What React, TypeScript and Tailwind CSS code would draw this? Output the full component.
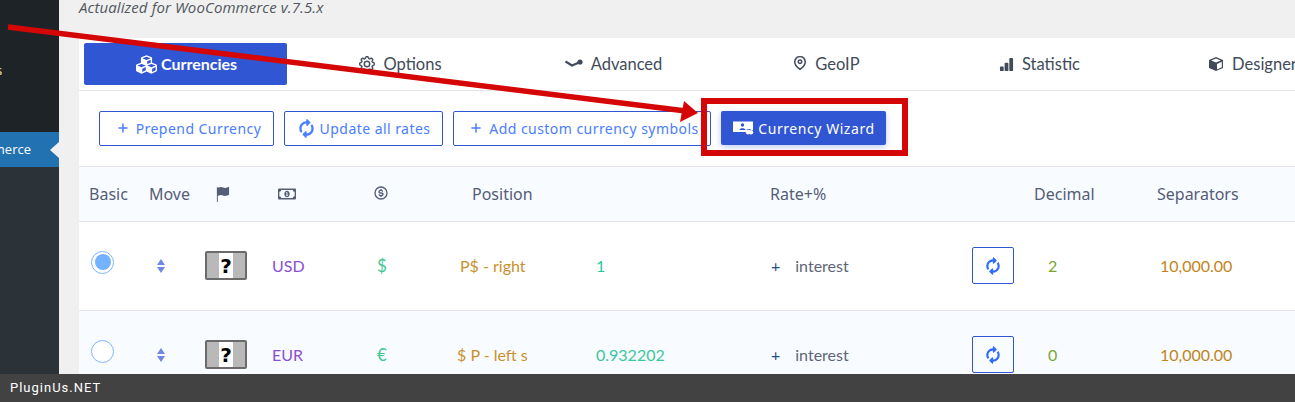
import { FaCubes, FaSyncAlt, FaRegMoneyBillAlt } from 'react-icons/fa'
import { BsGear, BsBarChartFill, BsFlagFill } from 'react-icons/bs'
import { BiDollarCircle } from 'react-icons/bi'
import { FiPlus, FiMapPin } from 'react-icons/fi'

const tabs = [
  { label: 'Options', icon: <BsGear size={16} strokeWidth={0.5} /> },
  { label: 'Advanced', icon: <AdvancedIcon /> },
  { label: 'GeoIP', icon: <FiMapPin size={14} strokeWidth={2.6} className="mb-[3px]" /> },
  { label: 'Statistic', icon: <BsBarChartFill size={15} /> },
  { label: 'Designer', icon: <DesignerIcon /> },
]

const rows = [
  { code: 'USD', symbol: '$', position: 'P$ - right', positionPad: 'pl-[30px]', rate: '1', decimal: '2', checked: true, bg: 'bg-white', rateColor: 'text-[#1fc99b]' },
  { code: 'EUR', symbol: '€', position: '$ P - left s', positionPad: 'pl-[27px]', rate: '0.932202', decimal: '0', checked: false, bg: 'bg-[#f8fbff]', rateColor: 'text-[#3cc79a]' },
]

function AdvancedIcon() {
  return (
    <svg width="18" height="10" viewBox="0 0 18 10" fill="none">
      <path d="M0.5 2.5 L7 6.5 L14 3.5" stroke="#414b5a" strokeWidth="2.2" />
      <circle cx="15" cy="3" r="2.6" fill="#414b5a" />
    </svg>
  )
}

function DesignerIcon() {
  return (
    <svg width="16" height="16" viewBox="0 0 16 16">
      <path d="M8 1 L15 4 V12 L8 15 L1 12 V4 Z" fill="#414b5a" />
      <path d="M8 2.6 L12.8 4.5 L8 6.5 L3.2 4.5 Z M9 8 L13.8 5.8 V11.3 L9 13.4 Z" fill="#fff" />
    </svg>
  )
}

function WizardIcon() {
  return (
    <svg width="21" height="14" viewBox="0 0 21 14">
      <path d="M0 0.5 H20 V9 H18 L17 8 H14 L12.5 11 H0 Z" fill="#fff" />
      <circle cx="9.5" cy="4" r="1.7" fill="#3056d3" />
      <path d="M6.5 9 C6.5 6.5 12.5 6.5 12.5 9 Z" fill="#3056d3" />
      <circle cx="15" cy="11" r="2.4" fill="#fff" />
      <circle cx="18" cy="11.2" r="2.2" fill="#fff" />
    </svg>
  )
}

function UnknownFlag() {
  return (
    <div className="flex h-[29px] w-[42px] justify-center rounded-[2px] border-2 border-[#6b6b6b] bg-[#b9b9b9]">
      <div className="flex w-[14px] items-center justify-center bg-white font-['DejaVu_Sans',sans-serif] text-[20px] leading-none font-bold text-black">
        ?
      </div>
    </div>
  )
}

function RefreshButton() {
  return (
    <div className="flex h-[37px] w-[42px] items-center justify-center rounded-[2px] border border-[#3056d3] text-[#2f6bff]">
      <FaSyncAlt size={14} className="-rotate-45" />
    </div>
  )
}

function OutlineButton({ icon, label, className }: { icon: React.ReactNode; label: string; className: string }) {
  return (
    <div className={`flex h-[35px] items-center justify-center gap-[6px] rounded-[2px] border border-[#3056d3] text-[14px] tracking-[0.45px] text-[#4a7dff] ${className}`}>
      {icon}
      <span>{label}</span>
    </div>
  )
}

export default function App() {
  return (
    <div className="relative flex h-[402px] w-[1295px] flex-col overflow-hidden bg-[#f0f0f1] font-['Noto_Sans',sans-serif]">
      <div className="flex min-h-0 flex-1">
        <aside className="flex w-[59px] shrink-0 flex-col">
          <div className="h-[132px] bg-[#1d2327] pt-[61px] text-[13px] text-[#e8e0b0]">
            <div className="-ml-[4px] leading-[18px]">s</div>
          </div>
          <div className="flex h-[35px] items-center justify-end overflow-hidden bg-[#2271b1] whitespace-nowrap text-white">
            <span className="font-['Open_Sans',sans-serif] text-[13px]">WooCommerce</span>
            <span className="ml-[19px] h-0 w-0 shrink-0 border-y-[8px] border-r-[9px] border-y-transparent border-r-[#f0f0f1]" />
          </div>
          <div className="flex-1 bg-[#2c3338]" />
        </aside>

        <main className="min-w-0 flex-1 overflow-hidden pl-[20px]">
          <div className="flow-root h-[38px]">
            <p className="-mt-[3px] font-['Open_Sans',sans-serif] text-[15px] leading-[20px] tracking-[0.1px] italic text-[#50575e]">
              Actualized for WooCommerce v.7.5.x
            </p>
          </div>

          <section className="w-[1300px] bg-white">
            <div className="flex h-[53px] gap-[10px] overflow-hidden border-b border-[#e3e5e9] pt-[5px] pl-[5px] font-['Lato',sans-serif]">
              <div className="flex h-[42px] w-[203px] shrink-0 items-center justify-center gap-[4px] rounded-[2px] bg-[#3056d3] pl-[2px] text-[16px] font-bold text-white">
                <FaCubes size={21} />
                <span>Currencies</span>
              </div>
              {tabs.map((tab) => (
                <div key={tab.label} className="flex h-[42px] w-[203px] shrink-0 items-center justify-center gap-[8px] pl-[4px] text-[16.5px] whitespace-nowrap text-[#414b5a]">
                  {tab.icon}
                  <span>{tab.label}</span>
                </div>
              ))}
            </div>

            <div className="flex h-[76px] items-center gap-[10px] border-b border-[#e3e5e9] pb-[1px] pl-[20px]">
              <OutlineButton className="w-[175px] pl-[4px]" icon={<FiPlus size={14} strokeWidth={2.6} />} label="Prepend Currency" />
              <OutlineButton className="w-[159px] pl-[2px]" icon={<FaSyncAlt size={15} className="-rotate-45" />} label="Update all rates" />
              <OutlineButton className="w-[258px] pl-[4px]" icon={<FiPlus size={14} strokeWidth={2.6} />} label="Add custom currency symbols" />
              <div className="flex h-[34px] w-[165px] items-center justify-center gap-[4px] rounded-[2px] bg-[#3056d3] pl-[1px] text-[14px] tracking-[0.55px] text-white shadow-[0_2px_6px_rgba(48,86,211,0.3)]">
                <WizardIcon />
                <span>Currency Wizard</span>
              </div>
            </div>

            <div className="grid h-[55px] grid-cols-[61px_60px_58px_72px_100px_140px_190px_200px_65px_115px_1fr] items-center border-b border-[#e3e5e9] bg-[#f8fbff] text-[16px] text-[#555d77]">
              <div className="pl-[10px]">Basic</div>
              <div className="pl-[9px]">Move</div>
              <div className="pl-[15px]"><BsFlagFill size={15} /></div>
              <div className="pl-[20px]"><FaRegMoneyBillAlt size={18} /></div>
              <div className="mb-[3px] pl-[43px]"><BiDollarCircle size={16} /></div>
              <div className="pl-[42px]">Position</div>
              <div />
              <div className="pl-[10px]">Rate+%</div>
              <div />
              <div className="pl-[9px]">Decimal</div>
              <div className="pl-[17px]">Separators</div>
            </div>

            {rows.map((row) => (
              <div key={row.code} className={`grid h-[89px] grid-cols-[61px_60px_58px_72px_100px_140px_190px_200px_65px_115px_1fr] items-center border-b border-[#e3e5e9] pb-[1px] font-['Lato',sans-serif] text-[16px] ${row.bg}`}>
                <div className="mb-[7px] pl-[12px]">
                  <div className="flex h-[23px] w-[23px] items-center justify-center rounded-full border border-[#7fb5ff] bg-white">
                    {row.checked && <div className="h-[16px] w-[16px] rounded-full bg-[#74b1ff]" />}
                  </div>
                </div>
                <div className="flex flex-col gap-[2px] pl-[17px]">
                  <span className="h-0 w-0 border-x-[4px] border-b-[6px] border-x-transparent border-b-[#6f86e4]" />
                  <span className="h-0 w-0 border-x-[4px] border-t-[6px] border-x-transparent border-t-[#6f86e4]" />
                </div>
                <div className="pl-[5px]"><UnknownFlag /></div>
                <div className="pl-[14px] text-[#8a4fd3]">{row.code}</div>
                <div className="pl-[47px] text-[17px] text-[#3cc98d]">{row.symbol}</div>
                <div className={`${row.positionPad} text-[#c8912e]`}>{row.position}</div>
                <div className={`pl-[26px] ${row.rateColor}`}>{row.rate}</div>
                <div className="flex items-center gap-[15px] pl-[11px] text-[#5d6678]">
                  <span className="text-[#24527f]">+</span>
                  <span>interest</span>
                </div>
                <div className="pl-[12px]"><RefreshButton /></div>
                <div className="pl-[23px] text-[#7aa82e]">{row.decimal}</div>
                <div className="pl-[20px] text-[#c1851a]">10,000.00</div>
              </div>
            ))}
          </section>
        </main>
      </div>

      <footer className="z-10 flex h-[28px] shrink-0 items-center bg-[#424242] pl-[10px] font-['Roboto',sans-serif] text-[13px] tracking-[1px] text-white">
        PluginUs.NET
      </footer>

      {/* annotation drawn on top of the screenshot */}
      <svg className="absolute top-0 left-0 z-20" width="1295" height="402" viewBox="0 0 1295 402" fill="none">
        <path d="M8 27 L686 111" stroke="#d40606" strokeWidth="5.5" />
        <path d="M684 101 L698 113 L680 122 Z" fill="#d40606" />
        <rect x="704" y="101" width="201" height="52" stroke="#d40606" strokeWidth="6" />
      </svg>
    </div>
  )
}
